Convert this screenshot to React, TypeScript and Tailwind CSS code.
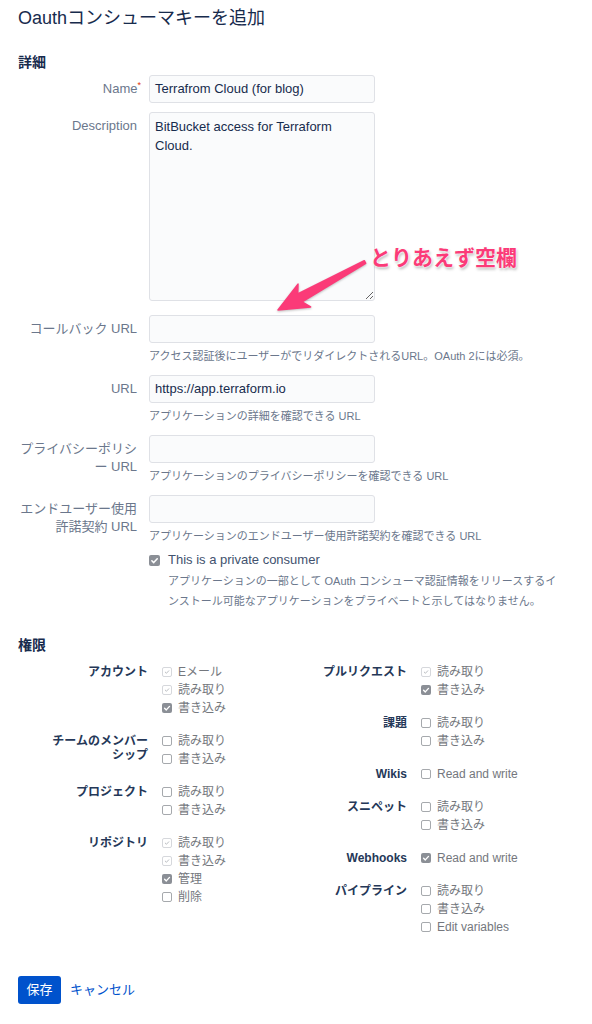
import React from 'react';

type BoxState = 'locked' | 'checked' | 'empty';

function Box({ state, size = 10 }: { state: BoxState; size?: number }) {
  const dim = size === 10 ? 'w-[10px] h-[10px]' : 'w-[11px] h-[11px]';
  if (state === 'checked') {
    return (
      <span className={`${dim} shrink-0 rounded-[2px] bg-[#8b8f96] flex items-center justify-center`}>
        <svg viewBox="0 0 10 10" className="w-full h-full">
          <path d="M2.6 5.2 L4.3 6.9 L7.5 3.4" fill="none" stroke="#fff" strokeWidth="1.4" strokeLinecap="round" strokeLinejoin="round" />
        </svg>
      </span>
    );
  }
  if (state === 'locked') {
    return (
      <span className={`${dim} shrink-0 rounded-[2px] border border-[#d6d8dc] bg-white flex items-center justify-center`}>
        <svg viewBox="0 0 10 10" className="w-full h-full">
          <path d="M2.8 5.1 L4.3 6.6 L7.2 3.5" fill="none" stroke="#a9adb3" strokeWidth="1" strokeLinecap="round" strokeLinejoin="round" />
        </svg>
      </span>
    );
  }
  return <span className={`${dim} shrink-0 rounded-[2px] border border-[#a6a9ad] bg-white`} />;
}

interface Perm {
  label: string[];
  items: [BoxState, string][];
}

const leftPerms: Perm[] = [
  { label: ['アカウント'], items: [['locked', 'Eメール'], ['locked', '読み取り'], ['checked', '書き込み']] },
  { label: ['チームのメンバー', 'シップ'], items: [['empty', '読み取り'], ['empty', '書き込み']] },
  { label: ['プロジェクト'], items: [['empty', '読み取り'], ['empty', '書き込み']] },
  { label: ['リポジトリ'], items: [['locked', '読み取り'], ['locked', '書き込み'], ['checked', '管理'], ['empty', '削除']] },
];

const rightPerms: Perm[] = [
  { label: ['プルリクエスト'], items: [['locked', '読み取り'], ['checked', '書き込み']] },
  { label: ['課題'], items: [['empty', '読み取り'], ['empty', '書き込み']] },
  { label: ['Wikis'], items: [['empty', 'Read and write']] },
  { label: ['スニペット'], items: [['empty', '読み取り'], ['empty', '書き込み']] },
  { label: ['Webhooks'], items: [['checked', 'Read and write']] },
  { label: ['パイプライン'], items: [['empty', '読み取り'], ['empty', '書き込み'], ['empty', 'Edit variables']] },
];

function PermColumn({ perms, labelWidth }: { perms: Perm[]; labelWidth: string }) {
  return (
    <div className="flex flex-col gap-[15px]">
      {perms.map((p) => (
        <div key={p.label.join('')} className="flex items-start">
          <div className={`${labelWidth} shrink-0 text-right pt-[2px] text-[12px] leading-[14px] font-bold text-[#253858]`}>
            {p.label.map((l) => (
              <div key={l}>{l}</div>
            ))}
          </div>
          <div className="ml-[14px] flex flex-col">
            {p.items.map(([state, text]) => (
              <div key={text} className="h-[18px] flex items-center gap-[6px] text-[12px] text-[#74777d] whitespace-nowrap">
                <Box state={state} />
                <span>{text}</span>
              </div>
            ))}
          </div>
        </div>
      ))}
    </div>
  );
}

const inputCls =
  'w-[226px] h-[28px] rounded-[3px] border border-[#dfe1e6] bg-[#fafbfc] px-[5px] flex items-center text-[13px] text-[#172b4d]';

function Label({ children }: { children: React.ReactNode }) {
  return (
    <div className="w-[131px] shrink-0 pr-[12px] pt-[5px] text-right text-[13px] leading-[18px] text-[#6b778c]">
      {children}
    </div>
  );
}

function Help({ children }: { children: React.ReactNode }) {
  return <div className="mt-[5px] text-[11px] leading-[16px] text-[#6b778c] whitespace-nowrap">{children}</div>;
}

export default function App() {
  return (
    <div className="relative w-[592px] min-h-[1024px] bg-white px-[18px] pt-[8px] font-['Liberation_Sans','Noto_Sans_CJK_JP',sans-serif]">
      <h1 className="text-[18px] leading-[20px] text-[#172b4d]">Oauthコンシューマキーを追加</h1>

      <h2 className="mt-[25px] text-[14px] leading-[18px] font-bold text-[#172b4d]">詳細</h2>

      <div className="mt-[4px] flex">
        <div className="w-[131px] shrink-0 pr-[8px] pt-[5px] text-right text-[13px] leading-[18px] text-[#6b778c]">
          Name<span className="relative -top-[5px] text-[9px] text-[#de350b]">*</span>
        </div>
        <div className={inputCls}>Terrafrom Cloud (for blog)</div>
      </div>

      <div className="mt-[9px] flex">
        <Label>Description</Label>
        <textarea
          readOnly
          defaultValue="BitBucket access for Terraform Cloud."
          className="w-[226px] h-[189px] rounded-[3px] border border-[#dfe1e6] bg-[#fafbfc] px-[5px] pt-[4px] text-[13px] leading-[19px] text-[#172b4d] outline-none font-['Liberation_Sans','Noto_Sans_CJK_JP',sans-serif]"
        />
      </div>

      <div className="mt-[14px] flex">
        <Label>コールバック URL</Label>
        <div>
          <div className={inputCls} />
          <Help>アクセス認証後にユーザーがでリダイレクトされるURL。OAuth 2には必須。</Help>
        </div>
      </div>

      <div className="mt-[11px] flex">
        <Label>URL</Label>
        <div>
          <div className={inputCls}>https://app.terraform.io</div>
          <Help>アプリケーションの詳細を確認できる URL</Help>
        </div>
      </div>

      <div className="mt-[11px] flex">
        <Label>
          プライバシーポリシ
          <br />ー URL
        </Label>
        <div>
          <div className={inputCls} />
          <Help>アプリケーションのプライバシーポリシーを確認できる URL</Help>
        </div>
      </div>

      <div className="mt-[11px] flex">
        <Label>
          エンドユーザー使用
          <br />
          許諾契約 URL
        </Label>
        <div>
          <div className={inputCls} />
          <Help>アプリケーションのエンドユーザー使用許諾契約を確認できる URL</Help>
        </div>
      </div>

      <div className="mt-[7px] ml-[131px] h-[18px] flex items-center gap-[8px] text-[13px] text-[#42526e]">
        <Box state="checked" size={11} />
        <span>This is a private consumer</span>
      </div>
      <div className="mt-[2px] ml-[150px] text-[11px] leading-[20px] text-[#6b778c] whitespace-nowrap">
        アプリケーションの一部として OAuth コンシューマ認証情報をリリースするイ
        <br />
        ンストール可能なアプリケーションをプライベートと示してはなりません。
      </div>

      <h2 className="mt-[25px] text-[14px] leading-[18px] font-bold text-[#172b4d]">権限</h2>

      <div className="mt-[9px] -ml-[18px] grid grid-cols-[296px_1fr]">
        <PermColumn perms={leftPerms} labelWidth="w-[148px]" />
        <PermColumn perms={rightPerms} labelWidth="w-[111px]" />
      </div>

      <div className="mt-[40px] flex items-center">
        <button className="w-[43px] h-[28px] rounded-[3px] bg-[#0052cc] text-white text-[13px]">保存</button>
        <span className="ml-[9px] text-[13px] text-[#0052cc]">キャンセル</span>
      </div>

      {/* annotation */}
      <svg className="absolute left-0 top-0 pointer-events-none drop-shadow-[0_1px_1px_rgba(0,0,0,0.25)]" width="592" height="400" viewBox="0 0 592 400">
        <path
          d="M278 310 L310.6 306.9 L302.1 301.9 L365.7 263.3 L364.3 260.7 L297.7 294 L298 284.1 Z"
          fill="#fb3b78"
          stroke="#fb3b78"
          strokeWidth="1.5"
          strokeLinejoin="round"
        />
      </svg>
      <div className="absolute left-[370px] top-[245px] text-[21px] leading-[26px] font-bold text-[#fb3b78] whitespace-nowrap [text-shadow:0_0_2px_#fff,0_0_2px_#fff,1px_2px_3px_rgba(0,0,0,0.3)]">
        とりあえず空欄
      </div>
    </div>
  );
}
